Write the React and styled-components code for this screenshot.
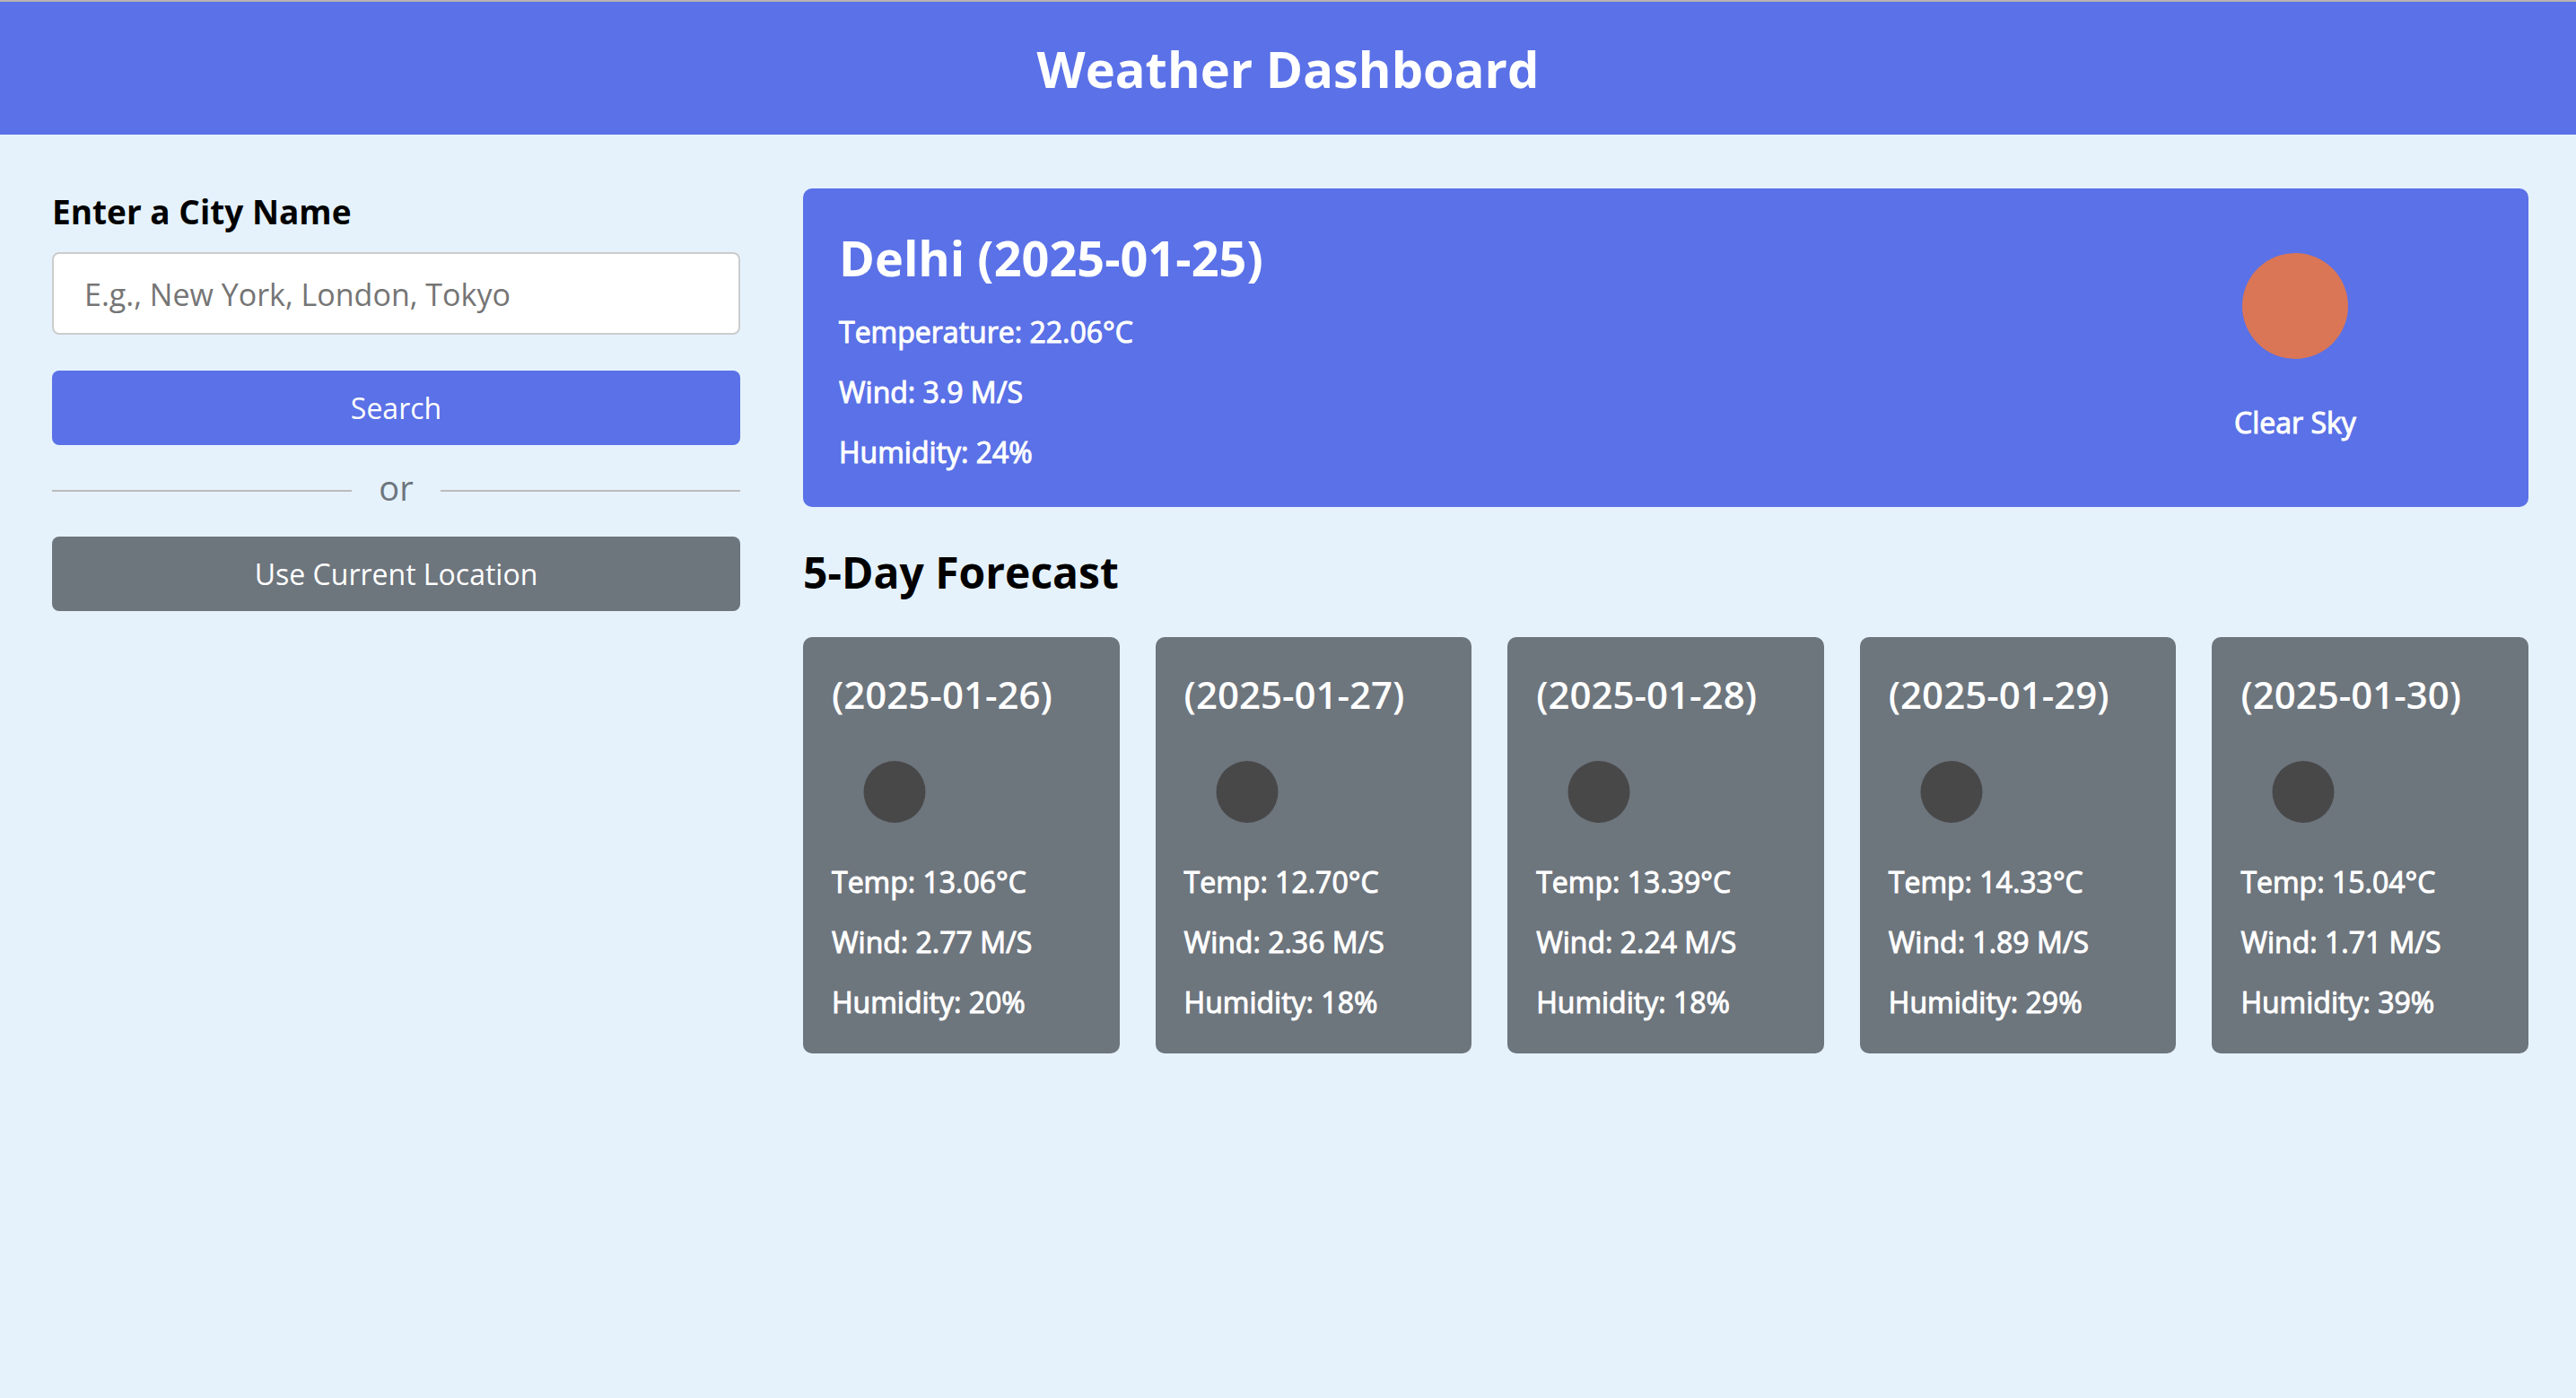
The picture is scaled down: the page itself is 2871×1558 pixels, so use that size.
import React from "react";
import styled, { createGlobalStyle } from "styled-components";

const GlobalStyle = createGlobalStyle`
  * { margin: 0; padding: 0; box-sizing: border-box; }
  body {
    background: #e5f2fc;
    font-family: "Open Sans", "Noto Sans", sans-serif;
    color: #000;
  }
`;

const Header = styled.header`
  background: #5a71e7;
  border-top: 2px solid #bbb2b2;
  padding: 36px;
  text-align: center;
`;

const Title = styled.h1`
  font-size: 56px;
  line-height: 76px;
  font-weight: 700;
  color: #fff;
`;

const Container = styled.main`
  display: grid;
  grid-template-columns: minmax(0, 767fr) minmax(0, 1923fr);
  gap: 70px;
  align-items: start;
  padding: 60px 53px 60px 58px;
`;

const SearchForm = styled.form`
  display: flex;
  flex-direction: column;
`;

const Label = styled.label`
  font-size: 37px;
  line-height: 51px;
  font-weight: 700;
  margin-bottom: 20px;
`;

const CityInput = styled.input`
  width: 100%;
  height: 92px;
  margin-bottom: 40px;
  padding: 2px 34px 0;
  border: 2px solid #ccc;
  border-radius: 8px;
  background: #fff;
  font: 400 34px "Open Sans", "Noto Sans", sans-serif;
  &::placeholder { color: #757575; opacity: 1; }
`;

const Button = styled.button`
  width: 100%;
  height: 83px;
  border: 0;
  border-radius: 8px;
  background: ${(p) => (p.$secondary ? "#6d757d" : "#5a71e7")};
  color: #fff;
  font: 400 32px "Open Sans", "Noto Sans", sans-serif;
  cursor: pointer;
`;

const Separator = styled.div`
  display: flex;
  align-items: center;
  gap: 30px;
  margin: 21px 0;
  &::before, &::after {
    content: "";
    flex: 1;
    height: 2px;
    background: #bbb;
  }
`;

const SeparatorText = styled.span`
  font-size: 38px;
  line-height: 52px;
  padding-bottom: 8px;
  color: #6d757d;
`;

const CurrentCard = styled.section`
  display: flex;
  justify-content: space-between;
  align-items: flex-start;
  padding: 40px 40px 38px;
  border-radius: 10px;
  background: #5a71e7;
  color: #fff;
`;

const Details = styled.div`
  display: flex;
  flex-direction: column;
  gap: 21px;
`;

const City = styled.h2`
  font-size: 54px;
  line-height: 74px;
  font-weight: 700;
  margin-bottom: 2px;
`;

const Reading = styled.p`
  font-size: 32px;
  line-height: 46px;
  font-weight: 500;
  -webkit-text-stroke: 1px currentColor;
`;

const Condition = styled.div`
  display: flex;
  flex-direction: column;
  align-items: center;
  gap: 48px;
  width: 240px;
  margin-right: 100px;
  padding-top: 32px;
`;

const SectionTitle = styled.h2`
  margin: 40px 0;
  font-size: 48px;
  line-height: 65px;
  font-weight: 700;
`;

const Forecast = styled.ul`
  display: grid;
  grid-template-columns: repeat(5, minmax(0, 1fr));
  gap: 40px;
  list-style: none;
`;

const DayCard = styled.li`
  padding: 35px 32px 34px;
  border-radius: 10px;
  background: #6d757d;
  color: #fff;
`;

const DayTitle = styled.h3`
  font-size: 42px;
  line-height: 57px;
  font-weight: 600;
  margin-bottom: 10px;
`;

const DayIcon = styled.svg`
  display: block;
  width: 140px;
  height: 140px;
  margin-bottom: 8px;
`;

const days = [
  { date: "2025-01-26", temp: "13.06", wind: "2.77", humidity: 20 },
  { date: "2025-01-27", temp: "12.70", wind: "2.36", humidity: 18 },
  { date: "2025-01-28", temp: "13.39", wind: "2.24", humidity: 18 },
  { date: "2025-01-29", temp: "14.33", wind: "1.89", humidity: 29 },
  { date: "2025-01-30", temp: "15.04", wind: "1.71", humidity: 39 },
];

export default function App() {
  return (
    <>
      <GlobalStyle />
      <Header>
        <Title>Weather Dashboard</Title>
      </Header>
      <Container>
        <SearchForm onSubmit={(e) => e.preventDefault()}>
          <Label htmlFor="city">Enter a City Name</Label>
          <CityInput id="city" type="text" placeholder="E.g., New York, London, Tokyo" />
          <Button type="submit">Search</Button>
          <Separator>
            <SeparatorText>or</SeparatorText>
          </Separator>
          <Button type="button" $secondary>Use Current Location</Button>
        </SearchForm>
        <div>
          <CurrentCard>
            <Details>
              <City>Delhi (2025-01-25)</City>
              <Reading>Temperature: 22.06°C</Reading>
              <Reading>Wind: 3.9 M/S</Reading>
              <Reading>Humidity: 24%</Reading>
            </Details>
            <Condition>
              <svg width="118" height="118" viewBox="0 0 118 118" aria-hidden="true">
                <circle cx="59" cy="59" r="59" fill="#da7656" />
              </svg>
              <Reading>Clear Sky</Reading>
            </Condition>
          </CurrentCard>
          <SectionTitle>5-Day Forecast</SectionTitle>
          <Forecast>
            {days.map((d) => (
              <DayCard key={d.date}>
                <DayTitle>({d.date})</DayTitle>
                <DayIcon viewBox="0 0 140 140" aria-hidden="true">
                  <circle cx="70" cy="70.5" r="34.5" fill="#484849" />
                </DayIcon>
                <Details>
                  <Reading>Temp: {d.temp}°C</Reading>
                  <Reading>Wind: {d.wind} M/S</Reading>
                  <Reading>Humidity: {d.humidity}%</Reading>
                </Details>
              </DayCard>
            ))}
          </Forecast>
        </div>
      </Container>
    </>
  );
}
